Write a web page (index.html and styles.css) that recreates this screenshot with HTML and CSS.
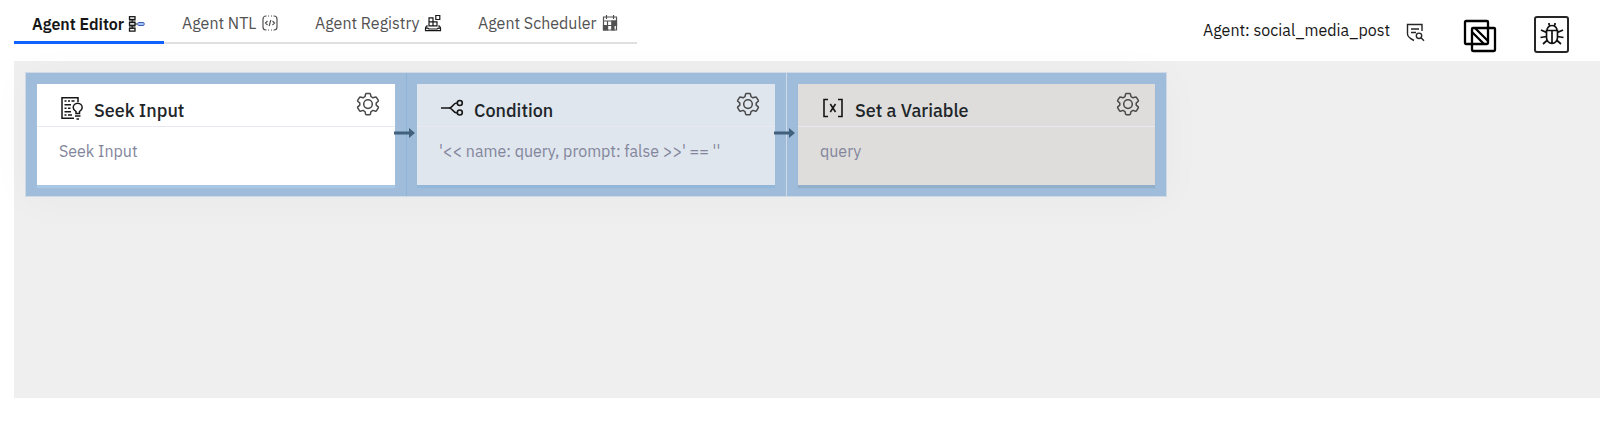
FILE: index.html
```html
<!DOCTYPE html>
<html lang="en">
<head>
<meta charset="utf-8">
<title>Agent Editor</title>
<link rel="stylesheet" href="styles.css">
</head>
<body>
<svg class="defs" aria-hidden="true">
  <symbol id="gear" viewBox="0 0 24 24">
    <path d="M10.200 1.500h3.600q.5 0 .6.500l.6 2.600 2 1.200 2.600-.8q.5-.2.800.3l1.900 3.100q.3.500-.1.900l-2 1.800v2l2 1.800q.4.400.1.900l-1.900 3.100q-.3.500-.8.300l-2.600-.8-2 1.200-.6 2.600q-.1.500-.6.500h-3.600q-.5 0-.6-.5L9 19.600l-2-1.200-2.600.8q-.5.200-.8-.3l-1.900-3.100q-.3-.5.100-.9l2-1.800v-2l-2-1.800q-.4-.4-.1-.9l1.900-3.100q.3-.5.8-.3l2.600.8 2-1.200.6-2.600q.1-.5.600-.5z" stroke-linejoin="round"/>
    <circle cx="12" cy="12.100" r="4.300"/>
  </symbol>
</svg>
<header class="topbar">
  <nav class="tabs" role="tablist" aria-label="Agent views">
    <button class="tab tab-active" role="tab" aria-selected="true">Agent Editor
      <svg class="icon-tab" viewBox="0 0 18 18"><g fill="none" stroke="#161616" stroke-width="1.300"><rect x="2.500" y="1.700" width="5.500" height="2.800"/><rect x="2.500" y="7.500" width="5.500" height="2.800"/><rect x="2.500" y="13.300" width="5.500" height="2.800"/><path d="M5.200 4.500v3M5.200 10.300v3M8 9h2.500M2 6h6.500M2 11.900h6.500" stroke-width="1"/></g><rect x="10.700" y="7.500" width="6.500" height="3" rx="1" fill="#a6c0f5" stroke="#3d5fb5"/></svg>
    </button>
    <button class="tab" role="tab" aria-selected="false">Agent NTL
      <svg class="icon-tab" viewBox="0 0 18 18" fill="none" stroke="#525252" stroke-width="1.200"><path d="M5.500 2H5a3 3 0 0 0-3 3v8a3 3 0 0 0 3 3h.5M12.500 2h.5a3 3 0 0 1 3 3v8a3 3 0 0 1-3 3h-.5M7 2h1M10 2h1M7 16h1M10 16h1M6.500 7l-2 2 2 2M11.500 7l2 2-2 2M9.800 6l-1.600 6"/></svg>
    </button>
    <button class="tab" role="tab" aria-selected="false">Agent Registry
      <svg class="icon-tab" viewBox="0 0 18 18" fill="none" stroke="#161616" stroke-width="1.300"><path d="M5 3.800h4v4H5zM5 7.800h8v4H5zM9 7.800v4M11.800 1.500h4v4h-4zM4 12H2.500L1.500 14v2.700h15V14l-1-2H14M1.500 14.200h2.300l1 .8h8.400l1-.8h2.300" stroke-width="1.200"/></svg>
    </button>
    <button class="tab" role="tab" aria-selected="false">Agent Scheduler
      <svg class="icon-tab" viewBox="0 0 18 18" fill="none" stroke="#525252" stroke-width="1.200"><path d="M2.500 3h13v13h-13zM2.500 7h13M2.500 11.500h13M6.500 7v9M11 7v9M5.500 1v4M12.500 1v4"/><path d="M11 7h4.500v4.500H11zM2.500 11.500h4V16h-4zM11 11.500h2V16h-2z" fill="#525252"/></svg>
    </button>
  </nav>
  <div class="tools">
    <span class="agent-name">Agent: social_media_post</span>
    <button class="tool tool-log" aria-label="View log">
      <svg viewBox="0 0 20 20" fill="none" stroke="#262626" stroke-width="1.400"><path d="M17 9V2.500H2.500V12c0 3 2.500 4.500 6.500 6.500M6 7h8M6 10.500h5"/><circle cx="14" cy="13.800" r="2.700"/><path d="m16 15.800 3 3"/></svg>
    </button>
    <button class="tool tool-overlap" aria-label="Compare versions">
      <svg viewBox="0 0 34 34" fill="none" stroke="#000" stroke-width="2.300"><rect x="2" y="2" width="23" height="23" rx="1"/><rect x="9" y="9" width="23" height="23" rx="1"/><path d="m12 9 13 13M9 13l12 12"/></svg>
    </button>
    <button class="tool tool-debug" aria-label="Debug">
      <svg viewBox="0 0 24 24" fill="none" stroke="#111" stroke-width="1.700"><path d="M6.500 8.500h11v7a5.500 6 0 0 1-11 0zM7 8.500a5 5 0 0 1 10 0M12 8.500v13M9 1v1.500l1 1.500M15 1v1.500L14 4M6.500 10.500 1 8M17.500 10.500 23 8M6.500 14.500 .5 15.500M17.500 14.500l6 1M7.500 18l-4.500 4M16.500 18l4.500 4"/></svg>
    </button>
  </div>
</header>
<main class="canvas">
  <div class="flow">
    <section class="step">
      <article class="card">
        <header class="card-head">
          <svg class="icon-card" viewBox="0 0 24 24" fill="none" stroke="#161616" stroke-width="1.500"><path d="M18 6V1.700H2v20.600h12M4.500 5h2M8 5h2M11.500 5h3M4.500 8.700h6.500M4.500 12.300h2M8 12.300h2.500M4.500 15.800H11M4.500 19h2M8 19h4M16 17.500v-2c-2-1.500-2.800-2.500-2.800-3.700a4.500 4.500 0 0 1 9 0c0 1.200-.8 2.200-2.700 3.700v2zM15 20h5.500M16.500 23h2.500"/></svg>
          <h2 class="card-title">Seek Input</h2>
          <button class="gear" aria-label="Configure Seek Input"><svg><use href="#gear"/></svg></button>
        </header>
        <p class="card-text">Seek Input</p>
      </article>
      <svg class="arrow" viewBox="0 0 22 12"><path d="M0 4.500h15V1l6 5-6 5V7.500H0z"/></svg>
    </section>
    <section class="step">
      <article class="card card-blue">
        <header class="card-head">
          <svg class="icon-card" viewBox="0 0 24 24" fill="none" stroke="#161616" stroke-width="1.600"><path d="M1 12h8c4 0 4-5.500 8-5M9 12c4 0 4 5.500 8 5"/><circle cx="19.800" cy="7" r="2.500"/><circle cx="19.800" cy="16.500" r="2.500"/></svg>
          <h2 class="card-title">Condition</h2>
          <button class="gear" aria-label="Configure Condition"><svg><use href="#gear"/></svg></button>
        </header>
        <p class="card-text">'&lt;&lt; name: query, prompt: false &gt;&gt;' == ''</p>
      </article>
      <svg class="arrow" viewBox="0 0 22 12"><path d="M0 4.500h15V1l6 5-6 5V7.500H0z"/></svg>
    </section>
    <section class="step">
      <article class="card card-grey">
        <header class="card-head">
          <svg class="icon-card" viewBox="0 0 24 24" fill="none" stroke="#161616" stroke-width="1.600"><path d="M7 3.500H3v17h4M17 3.500h4v17h-4M9.300 8l5.200 8M14.500 8l-5.200 8"/></svg>
          <h2 class="card-title">Set a Variable</h2>
          <button class="gear" aria-label="Configure Set a Variable"><svg><use href="#gear"/></svg></button>
        </header>
        <p class="card-text">query</p>
      </article>
    </section>
  </div>
</main>
</body>
</html>
```
FILE: styles.css
```css
* { box-sizing: border-box; }
body {
  margin: 0;
  min-height: 100vh;
  padding: 0 7px 27px 14px;
  display: flex;
  flex-direction: column;
  background: #fff;
  color: #161616;
  font: 16px/24px "IBM Plex Sans", "Noto Sans", sans-serif;
}
button {
  margin: 0;
  padding: 0;
  border: 0;
  background: none;
  color: inherit;
  font: inherit;
  cursor: pointer;
}
svg { display: block; }
.defs { display: none; }
.topbar {
  height: 61px;
  display: flex;
  justify-content: space-between;
  align-items: flex-start;
}
.tabs {
  display: grid;
  grid-template-columns: 150px 133px 163px 177px;
}
.tab {
  height: 44px;
  padding: 4px 0 0 18px;
  border-bottom: 2px solid #e0e0e0;
  display: flex;
  align-items: center;
  gap: 5px;
  color: #525252;
  white-space: nowrap;
}
.tab-active {
  gap: 3px;
  padding-top: 7px;
  border-bottom: 3px solid #0f62fe;
  color: #161616;
  font-weight: 600;
}
.icon-tab { width: 18px; height: 18px; flex: none; }
.tools {
  display: flex;
  align-items: center;
  padding-right: 31px;
  padding-top: 16px;
}
.agent-name { align-self: flex-start; padding-top: 2px; }
.tool-log { margin-left: 15px; margin-top: -6px; }
.tool-log svg { width: 20px; height: 20px; }
.tool-overlap { margin-left: 38px; padding-top: 2px; }
.tool-overlap svg { width: 34px; height: 34px; }
.tool-debug {
  width: 35px;
  height: 37px;
  margin-left: 37px;
  border: 2px solid #262626;
  border-radius: 3px;
  display: grid;
  justify-content: center;
  align-content: start;
  padding-top: 4px;
}
.tool-debug svg { width: 24px; height: 24px; }
.canvas {
  flex: 1;
  padding: 11px;
  background: #efefef;
}
.flow {
  width: fit-content;
  display: flex;
  border: 1px solid #d0dae6;
  box-shadow: 0 4px 40px rgba(22, 60, 50, 0.03);
}
.step {
  position: relative;
  width: 380px;
  padding: 11px;
  background: #9fbdda;
}
.step + .step { border-left: 1px solid #8fb3d4; }
.step + .step + .step { border-left-color: #d0dae6; }
.step + .step .card { margin-left: -1px; }
.step + .step + .step .card { margin-left: 0; }
.card {
  min-height: 101px;
  background: #fff;
  box-shadow: 0 3px 1px #a9c8e5;
}
.card-blue { background: #dfe6ed; box-shadow: 0 3px 1px #93b7d8; }
.card-grey { background: #dedddb; box-shadow: 0 3px 1px #91aecb; }
.card-head {
  height: 43px;
  padding: 0 15px 0 23px;
  border-bottom: 1px solid #e8e8f2;
  display: flex;
  align-items: center;
}
.icon-card { width: 24px; height: 24px; margin-top: 6px; }
.card-title {
  margin: 11px 0 0 10px;
  flex: 1;
  font-size: 18px;
  line-height: 24px;
  font-weight: 500;
  color: #212529;
}
.gear { margin-top: -2px; }
.gear svg {
  width: 24px;
  height: 24px;
  fill: none;
  stroke: #4a4a4a;
  stroke-width: 1.500;
}
.card-text {
  margin: 0;
  padding: 12px 22px;
  color: #83859c;
}
.arrow {
  position: absolute;
  z-index: 1;
  top: 54px;
  right: -10px;
  width: 22px;
  height: 12px;
  fill: #41617d;
}
```
